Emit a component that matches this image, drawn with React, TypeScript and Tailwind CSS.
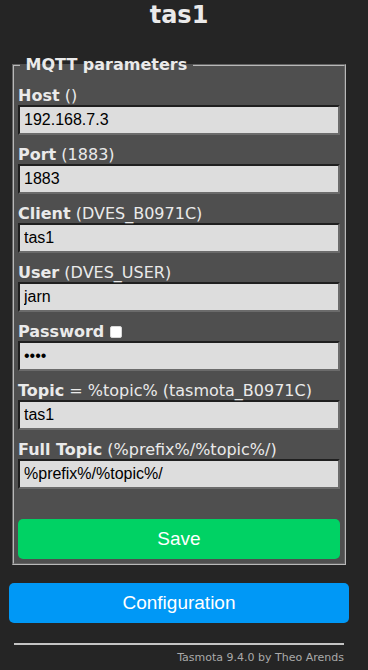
import React from 'react';

const FONT = "'DejaVu Sans', Verdana, sans-serif";
const INPUT_FONT = "'Liberation Sans', Arial, sans-serif";

type Field = {
  id: string;
  label: string;
  hint: React.ReactNode;
  value: string;
  password?: boolean;
};

const FIELDS: Field[] = [
  { id: 'mh', label: 'Host', hint: ' ()', value: '192.168.7.3' },
  { id: 'ml', label: 'Port', hint: ' (1883)', value: '1883' },
  { id: 'mc', label: 'Client', hint: ' (DVES_B0971C)', value: 'tas1' },
  { id: 'mu', label: 'User', hint: ' (DVES_USER)', value: 'jarn' },
  { id: 'mp', label: 'Password', hint: null, value: 'abcd', password: true },
  { id: 'mt', label: 'Topic', hint: ' = %topic% (tasmota_B0971C)', value: 'tas1' },
  { id: 'mf', label: 'Full Topic', hint: ' (%prefix%/%topic%/)', value: '%prefix%/%topic%/' },
];

function FieldRow({ field, first }: { field: Field; first: boolean }) {
  return (
    <div className={first ? 'mt-[12px]' : 'mt-[10px]'}>
      <div className="flex items-center leading-[19px] h-[19px] text-[16px] text-[#eaeaea] whitespace-pre">
        <b>{field.label}</b>
        {field.hint}
        {field.password && (
          <span className="ml-[6px] inline-block w-[12px] h-[12px] rounded-[2px] bg-white border border-[#d8d8d8]" />
        )}
      </div>
      <input
        id={field.id}
        type={field.password ? 'password' : 'text'}
        defaultValue={field.value}
        style={{ fontFamily: INPUT_FONT }}
        className="block w-full h-[30px] px-[4px] text-[16px] text-black bg-[#dddddd] border-2 border-t-[#1f1f1f] border-l-[#1f1f1f] border-r-[#6b6b6b] border-b-[#6b6b6b] outline-none"
      />
    </div>
  );
}

export default function App() {
  return (
    <div className="min-h-screen bg-[#252525] text-[#eaeaea]" style={{ fontFamily: FONT }}>
      <div className="w-[340px] ml-[9px] pt-[1px]">
        <h2 className="text-center text-[24px] leading-[28px] font-bold">tas1</h2>

        {/* Parámetros MQTT */}
        <fieldset className="mt-[26px] mx-[3px] pl-[4px] pr-[4px] pb-[4px] bg-[#4f4f4f] border-2 border-[#b8b8b8] [border-style:groove]">
          <legend className="ml-[2px] text-[16px] leading-[19px] font-bold">{'\u00a0MQTT parameters\u00a0'}</legend>
          {FIELDS.map((f, i) => (
            <FieldRow key={f.id} field={f} first={i === 0} />
          ))}
          <button
            type="button"
            style={{ fontFamily: INPUT_FONT }}
            className="mt-[30px] block w-full h-[40px] rounded-[5px] bg-[#00d264] text-white text-[19px]"
          >
            Save
          </button>
        </fieldset>

        <button
          type="button"
          style={{ fontFamily: INPUT_FONT }}
          className="mt-[18px] block w-full h-[40px] rounded-[5px] bg-[#0098f6] text-white text-[19px]"
        >
          Configuration
        </button>

        {/* Pie */}
        <div className="mt-[20px] px-[5px] text-right text-[11px]">
          <div className="h-[2px] bg-[#c4c4c4]" />
          <div className="mt-[6px] text-[#aaaaaa] leading-[13px]">Tasmota 9.4.0 by Theo Arends</div>
        </div>
      </div>
    </div>
  );
}
